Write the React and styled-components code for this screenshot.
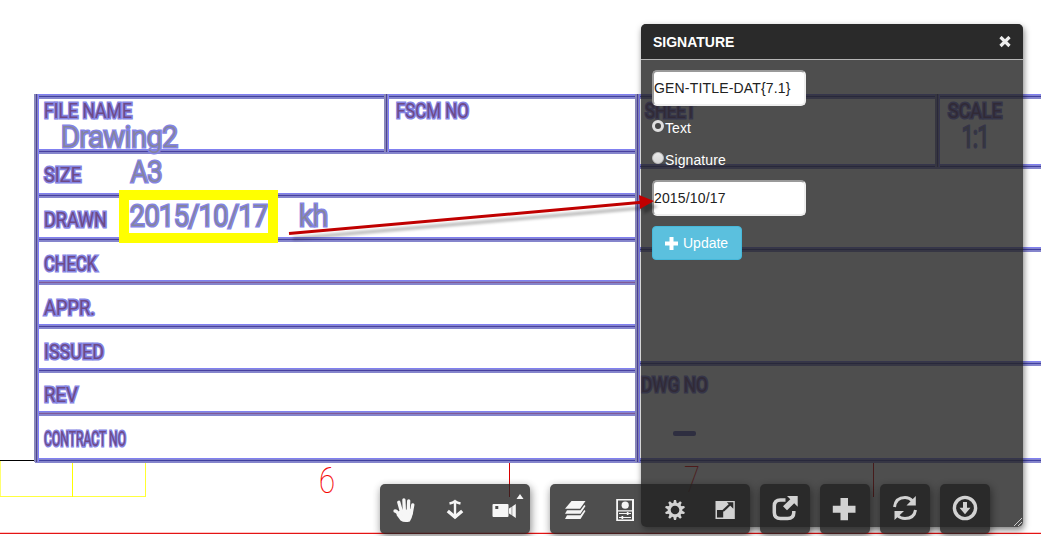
import React from "react";
import styled, { createGlobalStyle } from "styled-components";

const GlobalStyle = createGlobalStyle`
  * { box-sizing: border-box; }
  body { margin: 0; background: #fff; font-family: "Liberation Sans", Arial, sans-serif; font-size: 14px; }
`;

const Viewer = styled.main`
  position: relative;
  width: 1041px;
  height: 536px;
  overflow: hidden;
  background: #fff;
`;

const Sheet = styled.svg`
  display: block;
`;

const CadText = styled.text`
  font-family: "Roboto", sans-serif;
  font-weight: ${(p) => (p.$value ? 300 : 400)};
  font-size: ${(p) => p.$size || 20.5}px;
  fill: ${(p) => (p.$value ? "#85859a" : "#6e4a86")};
  stroke: #8484e4;
  stroke-width: 3.2px;
  stroke-linejoin: miter;
  paint-order: stroke;
`;

const ZoneNumber = styled.text`
  font-family: "Roboto", sans-serif;
  font-weight: 100;
  font-size: 37px;
  fill: #f00000;
  stroke: #ff0000;
  stroke-width: 0.2px;
`;

const Panel = styled.section`
  position: absolute;
  left: 641px;
  top: 24px;
  width: 382px;
  height: 503px;
  display: flex;
  flex-direction: column;
  border-radius: 5px;
  background: rgba(34, 34, 34, 0.8);
  box-shadow: 1px 3px 6px rgba(0, 0, 0, 0.5);
  color: #fff;
`;

const PanelHeader = styled.header`
  display: flex;
  justify-content: space-between;
  align-items: center;
  height: 36px;
  flex: none;
  padding: 0 12px;
  border-bottom: 1px solid #b5b5b5;
  border-radius: 5px 5px 0 0;
  background: rgba(34, 34, 34, 0.8);
`;

const PanelTitle = styled.h1`
  margin: 0;
  font-size: 14px;
  line-height: 20px;
  font-weight: 700;
`;

const CloseButton = styled.button`
  display: flex;
  padding: 0;
  border: 0;
  background: none;
`;

const Form = styled.form`
  display: flex;
  flex-direction: column;
  align-items: flex-start;
  padding: 10px 11px;
`;

const Field = styled.input`
  width: 154px;
  height: 36px;
  padding: 0;
  border: 2px solid;
  border-color: #9a9a9a #eee #eee #9a9a9a;
  border-radius: 5px;
  background: #fff;
  color: #222;
  font: 14px "Liberation Sans", Arial, sans-serif;
  letter-spacing: ${(p) => p.$spacing || 0}px;
  outline: none;
`;

const Options = styled.div`
  display: flex;
  flex-direction: column;
  gap: 12px;
  padding: 12px 0 10px;
`;

const Option = styled.label`
  display: flex;
  gap: 1px;
  height: 20px;
  line-height: 20px;
  letter-spacing: 0.1px;
`;

const Dot = styled.span`
  width: 12px;
  height: 12px;
  margin-top: 2px;
  border-radius: 50%;
  border: ${(p) => (p.$on ? "3px solid #dedede" : "1px solid #bdbdbd")};
  background: ${(p) => (p.$on ? "#444" : "linear-gradient(#e9e9e9, #d6d6d6)")};
`;

const UpdateButton = styled.button`
  display: flex;
  align-items: center;
  gap: 5px;
  width: 90px;
  height: 34px;
  margin-top: 10px;
  padding: 0 12px;
  border: 1px solid #46b8da;
  border-radius: 4px;
  background: #5bc0de;
  color: #fff;
  font: 14px "Liberation Sans", Arial, sans-serif;
`;

const Grip = styled.svg`
  align-self: flex-end;
  margin: auto 1px 1px 0;
`;

const Toolbar = styled.nav`
  position: absolute;
  left: 380px;
  top: 484px;
  display: flex;
  gap: 10px;
`;

const ToolGroup = styled.div`
  display: flex;
  margin-right: ${(p) => (p.$wide ? 10 : 0)}px;
  border-radius: 5px;
  background: #222;
  opacity: 0.8;
  box-shadow: 1px 3px 8px rgba(0, 0, 0, 0.6);
`;

const Tool = styled.button`
  display: block;
  width: 50px;
  height: 50px;
  padding: 0;
  border: 0;
  background: none;
  color: #f4f4f4;
`;

const Arrow = styled.svg`
  position: absolute;
  left: 0;
  top: 0;
  pointer-events: none;
`;

const HLine = ({ y, x1 = 35, x2 = 638, core = "#4040a0" }) => (
  <g shapeRendering="crispEdges">
    <rect x={x1} y={y - 2} width={x2 - x1} height="5" fill="#8585cc" />
    <rect x={x1} y={y - 2} width={x2 - x1} height="1" fill="#8080f0" />
    <rect x={x1} y={y} width={x2 - x1} height="1" fill={core} />
  </g>
);

const VLine = ({ x, y1 = 94, y2 = 462 }) => (
  <g shapeRendering="crispEdges">
    <rect x={x - 2} y={y1} width="5" height={y2 - y1} fill="#8888b8" />
    <rect x={x + 2} y={y1} width="1" height={y2 - y1} fill="#8080ff" />
    <rect x={x} y={y1} width="1" height={y2 - y1} fill="#4c409c" />
  </g>
);

const labels = [
  ["FILE NAME", 44, 118, 88],
  ["FSCM NO", 396, 118, 73],
  ["SIZE", 44, 182, 37],
  ["DRAWN", 44, 227, 63],
  ["CHECK", 44, 271, 53],
  ["APPR.", 44, 315, 51],
  ["ISSUED", 44, 359, 60],
  ["REV", 44, 402, 34],
  ["CONTRACT NO", 44, 446, 82],
  ["SHEET", 645, 118, 51],
  ["SCALE", 948, 118, 54],
  ["DWG NO", 641, 392, 67],
];

const values = [
  ["Drawing2", 61, 147, 117],
  ["A3", 131, 182, 31],
  ["2015/10/17", 130, 226, 138],
  ["kh", 299, 226, 29],
  ["1:1", 962, 147, 27],
];

const rows = [151, 195, 239, 282, 326, 370, 413];

function Drawing() {
  return (
    <Sheet width="1041" height="536">
      <g shapeRendering="crispEdges">
        <rect x="0" y="460" width="36" height="1" fill="#000" />
        <rect x="0" y="461" width="1" height="36" fill="#ffff70" />
        <rect x="0" y="496" width="146" height="1" fill="#ffff40" />
        <rect x="72" y="461" width="1" height="36" fill="#ff0" />
        <rect x="145" y="461" width="1" height="36" fill="#ffff30" />
        <rect x="509" y="461" width="1" height="36" fill="#d80000" />
        <rect x="873" y="461" width="1" height="36" fill="#d80000" />
        <rect x="0" y="532" width="1041" height="1" fill="#ffc4c4" />
        <rect x="0" y="533" width="1041" height="1" fill="#e31414" />
      </g>
      {rows.map((y) => (
        <HLine key={y} y={y} core={y === 282 || y === 413 ? "#805898" : "#4840a0"} />
      ))}
      <HLine y={96} x2={1041} />
      <HLine y={166} x1={637} x2={1041} />
      <HLine y={249} x1={637} x2={1041} />
      <HLine y={363} x1={637} x2={1041} />
      <HLine y={460} x2={1041} />
      <VLine x={36} />
      <VLine x={386} y2={152} />
      <VLine x={637} />
      <VLine x={937} y2={167} />
      {labels.map(([t, x, y, w]) => (
        <CadText key={t} x={x} y={y} textLength={w} lengthAdjust="spacingAndGlyphs">{t}</CadText>
      ))}
      {values.map(([t, x, y, w]) => (
        <CadText key={t} $value $size={30} x={x} y={y} textLength={w} lengthAdjust="spacingAndGlyphs">{t}</CadText>
      ))}
      <rect x="673" y="431" width="23" height="5" rx="2" fill="#6060b8" />
      <ZoneNumber x="319" y="493" textLength="16" lengthAdjust="spacingAndGlyphs">6</ZoneNumber>
      <ZoneNumber x="684" y="492" textLength="16" lengthAdjust="spacingAndGlyphs">7</ZoneNumber>
      <rect x="124" y="195" width="149" height="43" fill="none" stroke="#ff0" strokeWidth="10" />
    </Sheet>
  );
}

const Icon = ({ children }) => (
  <svg width="50" height="50" viewBox="0 0 50 50" fill="currentColor">{children}</svg>
);

const HandIcon = () => (
  <Icon>
    <path d="M19 27 L32.500 24.500 L32.800 30 Q32 34 29.800 37.500 Q24 39 20.500 36.500 L16.500 31 Z" />
    <path d="M15 27 Q17 27 19 31 L22 34 M18.800 18.300 L21.500 28 M23.900 15.800 L24.400 28 M28.700 16.800 L28.200 28 M32.800 20.800 L31.300 29" fill="none" stroke="currentColor" strokeWidth="3.300" strokeLinecap="round" strokeLinejoin="round" />
  </Icon>
);

const ZoomIcon = () => (
  <Icon>
    <path d="M25 17V34" stroke="currentColor" strokeWidth="2.400" />
    <path d="M19.500 19.400 Q23 18.700 25 17.200 Q27 18.700 30.500 19.400" fill="none" stroke="currentColor" strokeWidth="2.600" />
    <path d="M17.800 27 L25 33 L32.200 27" fill="none" stroke="currentColor" strokeWidth="3.400" />
  </Icon>
);

const CameraIcon = () => (
  <Icon>
    <path fillRule="evenodd" d="M13.500 20H27.500Q28.500 20 28.500 21V32Q28.500 33 27.500 33H13.500Q12.500 33 12.500 32V21Q12.500 20 13.500 20ZM15.300 22V25H18.300V22Z" />
    <path d="M29 24.500L31.700 22.800V31.200L29 29.500ZM32.200 22.500L35.800 20V34L32.200 31.500Z" />
    <path d="M36.500 15L40 10L43.500 15Z" />
  </Icon>
);

const LayersIcon = () => (
  <Icon>
    <path d="M21.500 17H35.500L30 24.800H15Z" />
    <path d="M17 26.200H30.500L34.300 21L35.500 22L30.500 29.700H15Z" />
    <path d="M17 31.200H30.500L34.300 26L35.500 27L30.500 35H15Z" />
  </Icon>
);

const PropertiesIcon = () => (
  <Icon>
    <path fillRule="evenodd" d="M16.200 15H34V37H16.200ZM18 16.500V26.300H32V16.500ZM18 27.500V35.500H32V27.500Z" />
    <circle cx="25.200" cy="21.200" r="3.600" />
    <path d="M19 29.500H31M19 33.500H31" stroke="currentColor" />
    <path d="M26.800 28H28.500V31H26.800ZM21.500 32H23.200V35H21.500Z" />
  </Icon>
);

const GearIcon = () => (
  <Icon>
    <circle cx="25" cy="26" r="5.800" fill="none" stroke="currentColor" strokeWidth="3" />
    {[0, 36, 72, 108, 144, 180, 216, 252, 288, 324].map((a) => (
      <path key={a} d="M23 20.200L24 16H26L27 20.200Z" transform={`rotate(${a} 25 26)`} />
    ))}
  </Icon>
);

const ExpandIcon = () => (
  <Icon>
    <path d="M15.500 17H34.800V35H15.500Z" />
    <path d="M17 26H23.200V33.500H17Z" fill="#222" />
    <path d="M23 27L31 19.500" stroke="#222" strokeWidth="2.200" />
    <path d="M26.800 18.300H33.300V24.800Z" fill="#222" />
  </Icon>
);

const ShareIcon = () => (
  <Icon>
    <path d="M25.500 16H20.500Q14.300 16 14.300 22V28.500Q14.300 34.500 20.500 34.500H27.500Q33.800 34.500 33.800 28.500V27" fill="none" stroke="currentColor" strokeWidth="3.500" />
    <path d="M27 12H37.700V22.800L34.200 19.300L27 26.300L23 22.300L30.300 15.300Z" />
  </Icon>
);

const PlusIcon = () => (
  <Icon><path d="M20.500 14H28V21.700H35.500V28.700H28V36.200H20.500V28.700H12.800V21.700H20.500Z" /></Icon>
);

const RefreshIcon = () => (
  <Icon>
    <path d="M14.500 23Q15.800 13.600 25 13.600Q29.500 13.600 32.500 17M35.500 26Q34.200 34.500 25 34.500Q20.500 34.500 17.500 31.500" fill="none" stroke="currentColor" strokeWidth="3" />
    <path d="M35.800 12V21.500H26.500ZM14.500 36V27H24Z" />
  </Icon>
);

const DownloadIcon = () => (
  <Icon>
    <circle cx="25" cy="24" r="10.600" fill="none" stroke="currentColor" strokeWidth="3.400" />
    <path d="M23 18H27V23.800H30.500L25 30.200L19.500 23.800H23Z" />
  </Icon>
);

const groups = [
  [["Pan", HandIcon], ["Zoom", ZoomIcon], ["Camera", CameraIcon]],
  [["Layers", LayersIcon], ["Properties", PropertiesIcon], ["Settings", GearIcon], ["Full screen", ExpandIcon]],
  [["Open", ShareIcon]],
  [["Add", PlusIcon]],
  [["Refresh", RefreshIcon]],
  [["Download", DownloadIcon]],
];

function SignaturePanel() {
  return (
    <Panel>
      <PanelHeader>
        <PanelTitle>SIGNATURE</PanelTitle>
        <CloseButton aria-label="Close">
          <svg width="12" height="12"><path d="M1.500 1L10.500 10M10.500 1L1.500 10" stroke="#eee" strokeWidth="3.200" /></svg>
        </CloseButton>
      </PanelHeader>
      <Form onSubmit={(e) => e.preventDefault()}>
        <Field defaultValue="GEN-TITLE-DAT{7.1}" $spacing={0.17} />
        <Options>
          <Option><Dot $on />Text</Option>
          <Option><Dot />Signature</Option>
        </Options>
        <Field defaultValue="2015/10/17" $spacing={0.15} />
        <UpdateButton>
          <svg width="13" height="13"><path d="M4.500 0H8.500V4.500H13V8.500H8.500V13H4.500V8.500H0V4.500H4.500Z" fill="#fff" /></svg>
          Update
        </UpdateButton>
      </Form>
      <Grip width="8" height="8"><path d="M0 8L8 0M4 8L8 4" stroke="#ccc" /></Grip>
    </Panel>
  );
}

export default function App() {
  return (
    <Viewer>
      <GlobalStyle />
      <Drawing />
      <SignaturePanel />
      <Toolbar>
        {groups.map((group, i) => (
          <ToolGroup key={i} $wide={i === 0}>
            {group.map(([name, Glyph]) => (
              <Tool key={name} aria-label={name}><Glyph /></Tool>
            ))}
          </ToolGroup>
        ))}
      </Toolbar>
      <Arrow width="1041" height="536">
        <defs>
          <filter id="soft" x="-5%" y="-50%" width="110%" height="220%"><feGaussianBlur stdDeviation="1.800" /></filter>
        </defs>
        <g opacity="0.3" filter="url(#soft)" transform="translate(4 5)">
          <path d="M289 233.500L642 202.500" stroke="#000" strokeWidth="3" />
          <path d="M639 195L654 201.500L640 209Z" />
        </g>
        <path d="M289 233.500L642 202.300" stroke="#c00000" strokeWidth="3" />
        <path d="M639 195L654 201L640 209Z" fill="#c00000" />
      </Arrow>
    </Viewer>
  );
}
